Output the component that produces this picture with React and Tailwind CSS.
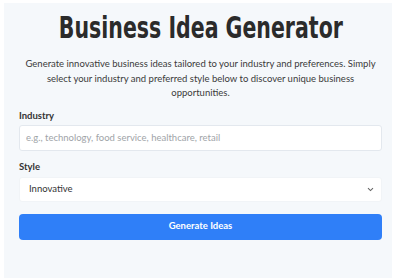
import React from "react";

export default function App() {
  return (
    <div className="w-[400px] h-[280px] bg-white pt-[3px] pl-[4px] overflow-hidden" style={{ fontFamily: 'Lato, "Open Sans", sans-serif' }}>
      <div className="w-[388px] h-[275px] bg-[#f5f8fb] pl-[15px] pr-[10px] pt-[8px] flex flex-col">
        <div className="flex justify-center h-[34px]">
          <h1
            className="inline-block whitespace-nowrap scale-x-[0.76] text-[30px] leading-[34px] font-bold text-[#2b2b2b]"
            style={{ fontFamily: '"DejaVu Sans Condensed", "DejaVu Sans", sans-serif' }}
          >
            Business Idea Generator
          </h1>
        </div>
        <p className="mt-[12px] text-center text-[9.5px] leading-[14.5px] text-[#3a3a3a]">
          Generate innovative business ideas tailored to your industry and preferences. Simply select your industry and preferred style below to discover unique business opportunities.
        </p>
        <label className="mt-[8px] text-[9.5px] font-bold text-[#333] leading-[13px]">Industry</label>
        <input
          className="mt-[3px] h-[26px] w-full bg-white border border-[#e3e8ee] rounded-[3px] px-[6px] text-[9.5px] text-[#333] placeholder:text-[#a0a4a8] outline-none"
          placeholder="e.g., technology, food service, healthcare, retail"
        />
        <label className="mt-[9.5px] text-[9.5px] font-bold text-[#333] leading-[13px]">Style</label>
        <div className="mt-[3.5px] h-[25px] w-full bg-white border border-[#f1f4f7] rounded-[3px] pl-[9px] pr-[7px] flex items-center justify-between text-[9.5px] text-[#333]">
          <span>Innovative</span>
          <svg width="7" height="5" viewBox="0 0 7 5">
            <path d="M1 1.2 L3.5 3.6 L6 1.2" fill="none" stroke="#666" strokeWidth="1.1" />
          </svg>
        </div>
        <button className="mt-[12px] h-[26px] w-full bg-[#2f7ff8] rounded-[4px] text-white text-[9.5px] font-bold">
          Generate Ideas
        </button>
      </div>
    </div>
  );
}
